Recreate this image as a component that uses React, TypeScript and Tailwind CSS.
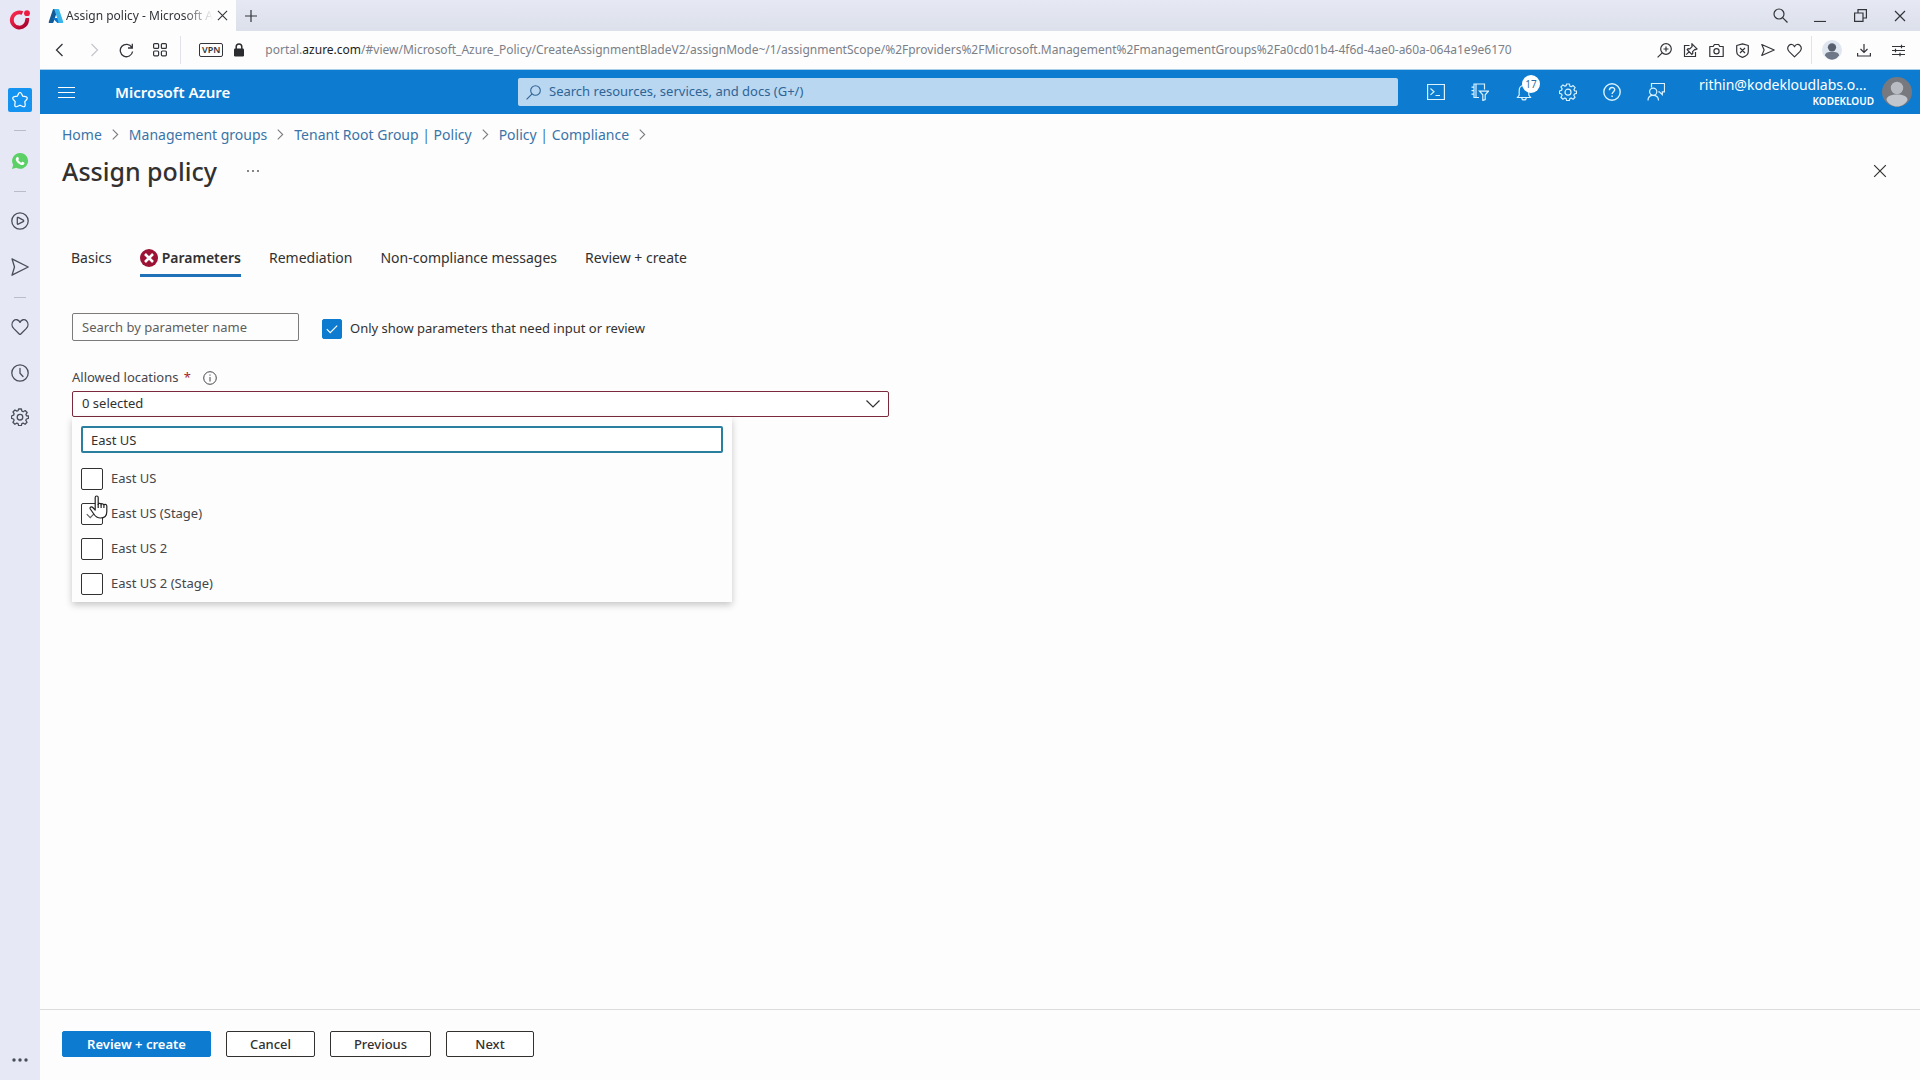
import { useState, type ReactNode } from "react";

const LOCATIONS = ["East US", "East US (Stage)", "East US 2", "East US 2 (Stage)"];
const CRUMBS = ["Home", "Management groups", "Tenant Root Group | Policy", "Policy | Compliance"];
const TABS = ["Basics", "Parameters", "Remediation", "Non-compliance messages", "Review + create"];

/* ---- Line icon base ---- */
function Icon({ size = 18, box = 18, stroke = 1.2, className = "", children }: { size?: number; box?: number; stroke?: number; className?: string; children: ReactNode }) {
  return (
    <svg width={size} height={size} viewBox={`0 0 ${box} ${box}`} fill="none" stroke="currentColor" strokeWidth={stroke} className={`shrink-0 ${className}`} aria-hidden="true">
      {children}
    </svg>
  );
}

const GEAR = "M7.6 1h2.8l.5 2.2 1.3.55 1.95-1.2 2 2-1.2 1.9.55 1.35L17.5 8v2.4l-2.1.6-.55 1.3 1.2 1.95-2 2-1.9-1.2-1.3.55-.5 2.1H7.6l-.5-2.1-1.3-.55-1.9 1.2-2-2 1.2-1.95L2.55 11 .5 10.4V8l2.1-.8.55-1.35-1.2-1.9 2-2 1.9 1.2 1.3-.55z";

function OperaLogo() {
  return (
    <svg width="22" height="22" viewBox="0 0 22 22" fill="none" aria-hidden="true">
      <defs>
        <linearGradient id="ring" x1="0" y1="0" x2="1" y2="1">
          <stop offset="0" stopColor="#ff2b4e" />
          <stop offset="1" stopColor="#a3002c" />
        </linearGradient>
      </defs>
      <path d="M13.5 4A7.6 7.6 0 1 0 18 10.5" stroke="url(#ring)" strokeWidth="3.8" />
      <circle cx="18" cy="4.2" r="2.9" fill="#ef1c42" />
      <path d="M16.5 9h3.6v3h-3.6z" fill="#c3103a" />
    </svg>
  );
}

function AzureLogo() {
  return (
    <svg width="16" height="16" viewBox="0 0 96 96" className="shrink-0" aria-hidden="true">
      <path fill="#135a96" d="M33.338 6.544h26.038l-27.03 80.087a4.152 4.152 0 0 1-3.933 2.824H8.149a4.145 4.145 0 0 1-3.928-5.47L29.404 9.368a4.152 4.152 0 0 1 3.934-2.825z" />
      <path fill="#0a78d0" d="M71.175 60.261h-41.29a1.911 1.911 0 0 0-1.305 3.309l26.532 24.764a4.171 4.171 0 0 0 2.846 1.121h23.38z" />
      <path fill="#39b5ec" d="M66.595 9.364a4.145 4.145 0 0 0-3.928-2.82H33.648a4.146 4.146 0 0 1 3.928 2.82l25.184 74.62a4.146 4.146 0 0 1-3.928 5.472h29.02a4.146 4.146 0 0 0 3.927-5.472z" />
    </svg>
  );
}

function WhatsApp() {
  return (
    <svg width="18" height="18" viewBox="0 0 18 18" aria-hidden="true">
      <path fill="#5bd066" d="M9.2 1a7.9 7.9 0 1 1-3.9 14.8L1 17l1.2-4.2A7.9 7.9 0 0 1 9.2 1z" />
      <path fill="#fff" d="M6.2 4.9c.5-.3.9-.1 1.1.4l.6 1.4c.1.3 0 .6-.6 1.3.7 1.3 1.7 2.1 3 2.7.7-.9.9-1 1.2-.9l1.6.8c.4.2.4.5.2 1.1-.4 1.2-2 1.6-3.2 1.2-2.6-.8-4.3-2.5-5.2-4.6-.5-1.4.1-2.8 1.3-3.4z" />
    </svg>
  );
}

function Avatar({ size, bg, fg, body }: { size: number; bg: string; fg: string; body: string }) {
  return (
    <svg width={size} height={size} viewBox="0 0 30 30" className="shrink-0" aria-hidden="true">
      <circle cx="15" cy="15" r="15" fill={bg} />
      <circle cx="15" cy="11" r="6.2" fill={fg} />
      <path d="M4.5 23c0-4 5-5.5 10.5-5.5S25.5 19 25.5 23c-2 4-6 6.5-10.5 6.5S6.5 27 4.5 23z" fill={body} />
    </svg>
  );
}

function IconButton({ label, className = "", children }: { label: string; className?: string; children: ReactNode }) {
  return (
    <button type="button" aria-label={label} className={`flex shrink-0 items-center justify-center ${className}`}>
      {children}
    </button>
  );
}

function Cross({ size = 12, stroke = 1.2 }: { size?: number; stroke?: number }) {
  return <Icon size={size} box={12} stroke={stroke}><path d="m1 1 10 10M11 1 1 11" /></Icon>;
}

/* ---- Browser side rail ---- */
function Divider() {
  return <div className="flex h-5 items-center"><span className="h-px w-3 bg-[#b9bcc9]" /></div>;
}

function SideRail() {
  return (
    <nav aria-label="Browser sidebar" className="flex w-10 shrink-0 flex-col items-center bg-[#e6e9f5] text-[#4a4d5c]">
      <IconButton label="Menu" className="mt-2 h-6 w-10"><OperaLogo /></IconButton>
      <IconButton label="Bookmarks" className="mt-14 mb-2 size-6 rounded-xs bg-[#1593f0] text-white">
        <Icon><path strokeLinejoin="round" d="M9 1.5c.7 0 1.1.5 1.4 1.1l1.3 2.5 2.9.6c1.7.3 2.1 1.6 1.1 2.8l-1.9 2.2.4 3c.2 1.7-.9 2.5-2.4 1.8L9 14.2l-2.8 1.3c-1.5.7-2.6-.1-2.4-1.8l.4-3-1.9-2.2c-1-1.2-.6-2.5 1.1-2.8l2.9-.6 1.3-2.5c.3-.6.7-1.1 1.4-1.1z" /></Icon>
      </IconButton>
      <Divider />
      <IconButton label="WhatsApp" className="h-[41px] w-10"><WhatsApp /></IconButton>
      <Divider />
      <IconButton label="Player" className="size-10">
        <Icon stroke={1.3}><circle cx="9" cy="9" r="8.2" /><path strokeLinejoin="round" d="M6.3 6c0-.6.4-.8.9-.6l5 2.7c.7.4.7 1.2 0 1.6l-5 2.5c-.5.2-.9 0-.9-.6z" /></Icon>
      </IconButton>
      <IconButton label="My Flow" className="mt-1.5 size-10">
        <Icon stroke={1.3}><path strokeLinejoin="round" d="M1 .8 17.2 9 1 17.2 3.5 9z" /></Icon>
      </IconButton>
      <Divider />
      <IconButton label="Favourites" className="size-10">
        <Icon stroke={1.3}><path strokeLinejoin="round" d="M9 4.4C7.7 1.3 4.3 1 2.6 2.7.5 4.8.5 8 2.6 10.4L8.2 16c.5.5 1.1.5 1.6 0l5.6-5.6c2.1-2.4 2.1-5.6 0-7.7C13.7 1 10.3 1.3 9 4.4z" /></Icon>
      </IconButton>
      <IconButton label="History" className="mt-1 h-11 w-10">
        <Icon stroke={1.3}><circle cx="9" cy="9" r="8.2" /><path strokeLinecap="round" d="M9 4.5v4.7l3 3.3" /></Icon>
      </IconButton>
      <IconButton label="Settings" className="h-11 w-10">
        <Icon stroke={1.3}><path strokeLinejoin="round" d={GEAR} /><circle cx="9" cy="9.2" r="2.8" /></Icon>
      </IconButton>
      <IconButton label="More" className="mt-auto mb-2 h-6 w-10">
        <svg width="16" height="4" viewBox="0 0 16 4" fill="currentColor" aria-hidden="true"><circle cx="2" cy="2" r="1.7" /><circle cx="8" cy="2" r="1.7" /><circle cx="14" cy="2" r="1.7" /></svg>
      </IconButton>
    </nav>
  );
}

/* ---- Tab strip and address bar ---- */
function TabStrip() {
  return (
    <div className="flex h-[31px] items-stretch bg-linear-to-b from-[#e6e9f4] to-[#dce0ea] text-[#33343a]">
      <div className="flex w-[196px] items-center bg-[#fdfdfd] pr-1 pl-2">
        <AzureLogo />
        <span className="ml-0.5 flex-1 mask-r-from-80% text-[12px] whitespace-nowrap">Assign policy - Microsoft A</span>
        <IconButton label="Close tab" className="size-5"><Cross size={11} /></IconButton>
      </div>
      <IconButton label="New tab" className="w-[30px]"><Icon size={12} box={12}><path d="M6 0v12M0 6h12" /></Icon></IconButton>
      <div className="ml-auto flex">
        <IconButton label="Search tabs" className="w-10"><Icon size={15} box={15}><circle cx="6" cy="6" r="5" /><path d="m9.6 9.6 4.9 4.9" /></Icon></IconButton>
        <IconButton label="Minimise" className="w-10"><Icon size={12} box={12}><path d="M0 11.5h12" /></Icon></IconButton>
        <IconButton label="Restore" className="w-10"><Icon size={13} box={13}><path d="M.6 4H9v8.4H.6zM4 4V.6h8.4V9H9" /></Icon></IconButton>
        <IconButton label="Close window" className="w-10"><Cross /></IconButton>
      </div>
    </div>
  );
}

function AddressBar() {
  return (
    <div className="flex h-[39px] items-center border-b border-[#a9cfe8] bg-[#fdfdfd] pl-1 text-[#33343a]">
      <IconButton label="Back" className="h-8 w-8"><Icon size={14} box={14} stroke={1.3}><path d="m9.5 1-6 6 6 6" /></Icon></IconButton>
      <IconButton label="Forward" className="h-8 w-9 text-[#c5c7cc]"><Icon size={14} box={14} stroke={1.3}><path d="m4.5 1 6 6-6 6" /></Icon></IconButton>
      <IconButton label="Reload" className="h-8 w-7"><Icon size={15} box={15} stroke={1.3}><path d="M12.8 4.3A6.2 6.2 0 1 0 13.6 8.5M13.3.8V5H9" /></Icon></IconButton>
      <IconButton label="Speed dial" className="h-8 w-10"><Icon size={14} box={14}><rect x=".6" y=".6" width="5" height="4.8" rx="1" /><rect x="8.4" y=".6" width="5" height="4.8" rx="1" /><rect x=".6" y="8" width="5" height="4.8" rx="1" /><rect x="8.4" y="8" width="5" height="4.8" rx="1" /></Icon></IconButton>
      <span className="h-7 w-px bg-[#e2e3e8]" />
      <button type="button" className="ml-[18px] h-[14px] rounded-xs border border-[#33343a] px-0.5 text-[9px] leading-3 font-semibold">VPN</button>
      <svg width="12" height="14" viewBox="0 0 12 14" className="ml-2.5" aria-hidden="true"><rect x="1" y="5.5" width="10" height="8" rx="1.2" fill="#2b2c30" /><path d="M3.2 6V3.8a2.8 2.8 0 0 1 5.6 0V6" fill="none" stroke="#2b2c30" strokeWidth="1.5" /></svg>
      <div className="ml-5 min-w-0 flex-1 truncate text-[12px] text-[#7b7f88]">
        portal.<span className="text-[#1d1e22]">azure.com</span>/#view/Microsoft_Azure_Policy/CreateAssignmentBladeV2/assignMode~/1/assignmentScope/%2Fproviders%2FMicrosoft.Management%2FmanagementGroups%2Fa0cd01b4-4f6d-4ae0-a60a-064a1e9e6170
      </div>
      <IconButton label="Zoom" className="h-8 w-[26px]"><Icon size={15} box={15}><circle cx="9" cy="6" r="5.3" /><path d="M5.2 9.8.6 14.4M9 3.5v5M6.5 6h5" /></Icon></IconButton>
      <IconButton label="Pin" className="h-8 w-[26px]"><Icon size={15} box={15}><path d="M6.5 2.5h-5v11h11V9M9 .8l5 5-1.2.8-.9-.2-2.3 2.3.2 1.7-1 .9-4.6-4.6.9-1 1.7.2 2.3-2.3-.2-.9zM6.2 8.6l-3 3" /></Icon></IconButton>
      <IconButton label="Snapshot" className="h-8 w-[26px]"><Icon size={15} box={15}><path strokeLinejoin="round" d="M.8 3.5h3.4l1.2-2h4.2l1.2 2h3.4v10H.8z" /><circle cx="7.5" cy="8.2" r="2.6" /></Icon></IconButton>
      <IconButton label="Ad blocker" className="h-8 w-[26px]"><Icon size={15} box={15}><path strokeLinejoin="round" d="m7.5.8 5.8 1.7v6c0 3-3 5-5.8 5.9-2.8-.9-5.8-2.9-5.8-5.9v-6zM5 5l5 5M10 5l-5 5" /></Icon></IconButton>
      <IconButton label="Send" className="h-8 w-[26px]"><Icon size={14} stroke={1.5}><path strokeLinejoin="round" d="m1 2 16 7-16 7 3-7z" /></Icon></IconButton>
      <IconButton label="Favourite" className="h-8 w-[26px]"><Icon size={15} stroke={1.4}><path strokeLinejoin="round" d="M9 4.4C7.7 1.3 4.3 1 2.6 2.7.5 4.8.5 8 2.6 10.4L9 16.6l6.4-6.2c2.1-2.4 2.1-5.6 0-7.7C13.7 1 10.3 1.3 9 4.4z" /></Icon></IconButton>
      <span className="mx-1 h-7 w-px bg-[#e2e3e8]" />
      <IconButton label="Profile" className="size-8"><Avatar size={20} bg="#e0e6ef" fg="#58606f" body="#6d7788" /></IconButton>
      <IconButton label="Downloads" className="size-8"><Icon size={14} box={14}><path d="M7 1v8.5M3.5 6 7 9.5 10.5 6M.6 10v3h12.8v-3" /></Icon></IconButton>
      <IconButton label="Easy setup" className="mr-1 h-8 w-9"><Icon size={13} box={13}><path d="M0 2.5h13M0 6.5h13M0 10.5h13M9.5.8v3.4M3.5 4.8v3.4M8 8.8v3.4" /></Icon></IconButton>
    </div>
  );
}

/* ---- Portal header ---- */
function PortalHeader() {
  return (
    <header className="flex h-11 items-center bg-[#0c7bd0] text-white">
      <div className="flex w-[478px] shrink-0 items-center">
        <IconButton label="Show portal menu" className="ml-2 h-11 w-9"><Icon size={17} box={17}><path d="M0 3.5h17M0 8.5h17M0 13.5h17" /></Icon></IconButton>
        <a href="#home" className="ml-[31px] text-[15px] font-semibold">Microsoft Azure</a>
      </div>
      <label className="flex h-7 min-w-0 flex-1 items-center rounded-xs bg-[#b9d7f1] px-2 text-[#2f6496]">
        <Icon size={15} box={15} stroke={1.1}><circle cx="9.5" cy="5.5" r="4.8" /><path d="M6.1 8.9.6 14.4" /></Icon>
        <input type="search" aria-label="Search" placeholder="Search resources, services, and docs (G+/)" className="ml-2 min-w-0 flex-1 text-[13px] outline-none placeholder:text-[#2f6496]" />
      </label>
      <div className="flex items-center pl-4 text-[#d9f2ff]">
        <IconButton label="Cloud Shell" className="size-11"><Icon><path d="M.6 1.5h16.8v15H.6zM3.500 5.500 7 8.700l-3.500 3.200M8.500 12.500H13" /></Icon></IconButton>
        <IconButton label="Directories and subscriptions" className="size-11"><Icon><path d="M8 14.5H3V1h10.5v5.5M.5 4.2H3M.5 7.7H3M.5 11.2H3M5 1v13.5M8.500 8.200h8.900l-3.200 3.600v4.700l-2.400 1v-5.700z" /></Icon></IconButton>
        <div className="relative">
          <IconButton label="Notifications" className="size-11"><Icon><path d="M2.500 14.500h13l-1.700-2.500V7.500c0-3-2-5-4.800-5s-4.800 2-4.800 5V12zM6.800 14.700c0 3 4.400 3 4.400 0" /></Icon></IconButton>
          <span className="absolute top-[5px] left-5 grid size-[18px] place-items-center rounded-full bg-white text-[10px] text-[#2b6ca5]">17</span>
        </div>
        <IconButton label="Settings" className="size-11"><Icon><path strokeLinejoin="round" d={GEAR} /><circle cx="9" cy="9.2" r="3" /></Icon></IconButton>
        <IconButton label="Help" className="size-11"><Icon stroke={1.4}><circle cx="9" cy="9" r="8.2" /><path d="M6.4 7.2c0-3.6 5.3-3.6 5.3-.4 0 1.8-2.6 2-2.6 4.2M9.1 12.4v1.7" /></Icon></IconButton>
        <IconButton label="Feedback" className="size-11"><Icon><path d="M4.5 4.5v-4h13v8.300h-2.200v2.800l-3-2.800h-1M1 17.500c0-3.600 2.200-5.200 5-5.200s5.500 1.600 5.500 5.200" /><circle cx="6.2" cy="8.7" r="3.6" /></Icon></IconButton>
      </div>
      <button type="button" className="ml-[21px] flex items-center gap-2 pr-2">
        <span className="flex w-[175px] flex-col items-end">
          <span className="w-full text-left text-[14px] leading-[18px] whitespace-nowrap">rithin@kodekloudlabs.o...</span>
          <span className="text-[10px] leading-[14px] font-semibold">KODEKLOUD</span>
        </span>
        <Avatar size={30} bg="#77797e" fg="#b9bcc3" body="#c3c6cd" />
      </button>
    </header>
  );
}

/* ---- Form pieces ---- */
function Tick({ className = "" }: { className?: string }) {
  return <Icon size={12} box={12} className={`pointer-events-none col-start-1 row-start-1 ${className}`}><path d="m.8 6.2 3.400 3.400 7-7" /></Icon>;
}

function LocationRow({ name, hovered }: { name: string; hovered?: boolean }) {
  return (
    <label className="flex h-[35px] items-center gap-2 text-[13px] text-[#45464a]">
      <span className="grid shrink-0 place-items-center">
        <input type="checkbox" className="peer col-start-1 row-start-1 size-[22px] appearance-none rounded-xs border border-[#323130] bg-white" />
        <Tick className={hovered ? "text-[#605e5c]" : "text-transparent peer-checked:text-[#605e5c]"} />
      </span>
      {name}
    </label>
  );
}

function HandCursor() {
  return (
    <svg width="20" height="24" viewBox="0 0 20 24" className="pointer-events-none absolute top-[78px] left-[17px]" aria-hidden="true">
      <path d="M6.2 2.5c0-2 3-2 3 0v7c0-1.600 2.900-1.500 2.900.3 0-1.500 2.800-1.300 2.800.5 0-1.300 2.900-1.200 2.900.8v5.400c0 4-2.500 6.500-6.300 6.500-3.300 0-5-1.300-6.700-4L1.300 14c-1-1.600 1.200-2.900 2.500-1.500l2.400 2.600z" fill="#fff" stroke="#222" strokeWidth="1.2" strokeLinejoin="round" />
      <path d="M9.2 9v4M12.1 10v3M14.9 10.5V13" stroke="#222" strokeWidth="1.2" />
    </svg>
  );
}

function Locations() {
  const [query, setQuery] = useState("East US");
  const rows = LOCATIONS.filter((l) => l.toLowerCase().includes(query.toLowerCase()));
  return (
    <div className="relative mt-6 w-[817px] max-w-full">
      <div className="flex h-[26px] items-center text-[13px] text-[#45464a]">
        <label htmlFor="locations">Allowed locations <span className="ml-0.5 text-[#a4262c]">*</span></label>
        <Icon size={14} box={14} stroke={1} className="ml-3"><circle cx="7" cy="7" r="6.3" /><path d="M7 6v4.5M7 3.500v1.200" /></Icon>
      </div>
      <div className="grid items-center">
        <select id="locations" className="col-start-1 row-start-1 h-[26px] appearance-none rounded-xs border border-[#7a2a3c] bg-white px-[9px] text-[13px] text-[#323130]">
          <option>0 selected</option>
        </select>
        <Icon size={14} box={14} className="pointer-events-none col-start-1 row-start-1 mr-[9px] justify-self-end text-[#323130]"><path d="M.5 3.500 7 10l6.500-6.500" /></Icon>
      </div>
      <div className="absolute top-full left-0 w-[660px] max-w-full bg-[#fdfdfd] px-[9px] pt-[9px] pb-px shadow-[0_3px_7px_rgba(0,0,0,0.22)]">
        <input type="text" aria-label="Filter locations" value={query} onChange={(e) => setQuery(e.target.value)} className="mb-2 block h-[27px] w-full rounded-xs border-2 border-[#2a7f9e] bg-white px-2 text-[13px] text-[#323130] outline-none" />
        {rows.map((l) => <LocationRow key={l} name={l} hovered={l === "East US (Stage)"} />)}
        <HandCursor />
      </div>
    </div>
  );
}

function ErrorBadge() {
  return (
    <svg width="18" height="18" viewBox="0 0 18 18" className="mr-1" aria-hidden="true">
      <circle cx="9" cy="9" r="9" fill="#9b1234" />
      <path d="m5 5 8 8M13 5l-8 8" stroke="#fff" strokeWidth="2.6" />
    </svg>
  );
}

function FooterButton({ label, className }: { label: string; className: string }) {
  return <button type="button" className={`h-[26px] rounded-xs border text-[13px] leading-none ${className}`}>{label}</button>;
}

export default function App() {
  return (
    <div className="flex min-h-screen bg-[#fdfdfd] font-['Noto_Sans',sans-serif] text-[#323130]">
      <SideRail />
      <div className="flex min-w-0 flex-1 flex-col">
        <TabStrip />
        <AddressBar />
        <PortalHeader />
        <main className="flex flex-1 flex-col pl-[22px]">
          <nav aria-label="Breadcrumb" className="flex h-10 items-center gap-2 text-[14px] text-[#3a74a8]">
            {CRUMBS.map((c) => (
              <span key={c} className="flex items-center gap-2">
                <a href="#crumb">{c}</a>
                <Icon size={11} box={10} stroke={1} className="text-[#7a7c80]"><path d="M2.500.5 7 5 2.500 9.500" /></Icon>
              </span>
            ))}
          </nav>
          <div className="flex h-[33px] items-center">
            <h1 className="text-[25px] leading-8 font-medium">Assign policy</h1>
            <IconButton label="More" className="ml-7 h-6 w-4"><svg width="12" height="2" viewBox="0 0 12 2" fill="#605e5c" aria-hidden="true"><circle cx="1" cy="1" r="1" /><circle cx="6" cy="1" r="1" /><circle cx="11" cy="1" r="1" /></svg></IconButton>
            <IconButton label="Close" className="mr-6 ml-auto size-8"><Cross size={14} stroke={1} /></IconButton>
          </div>
          <div role="tablist" className="mt-[54px] ml-[9px] flex gap-7 text-[14px]">
            {TABS.map((t) => {
              const active = t === "Parameters";
              return (
                <button key={t} type="button" role="tab" aria-selected={active} className={`flex h-9 items-center border-b-3 ${active ? "border-[#1f72b8] font-semibold" : "border-transparent"}`}>
                  {active && <ErrorBadge />}
                  {t}
                </button>
              );
            })}
          </div>
          <section className="pt-9 pl-[10px]">
            <div className="flex items-start">
              <input type="text" aria-label="Search by parameter name" placeholder="Search by parameter name" className="h-7 w-[227px] rounded-xs border border-[#7d7b79] px-[9px] text-[13px] outline-none placeholder:text-[#605e5c]" />
              <label className="ml-[23px] flex items-center gap-2 pt-[6px] text-[13px]">
                <span className="grid place-items-center">
                  <input type="checkbox" defaultChecked className="peer col-start-1 row-start-1 size-5 appearance-none rounded-xs border border-[#323130] checked:border-[#0c7bd0] checked:bg-[#0c7bd0]" />
                  <Tick className="text-white" />
                </span>
                Only show parameters that need input or review
              </label>
            </div>
            <Locations />
          </section>
        </main>
        <footer className="flex h-[71px] items-center gap-[15px] border-t border-[#dcdcdc] pb-0.5 pl-[22px]">
          <FooterButton label="Review + create" className="w-[149px] border-[#0c7bd0] bg-[#0c7bd0] font-semibold text-white" />
          <FooterButton label="Cancel" className="w-[89px] border-[#323130] bg-white font-medium" />
          <FooterButton label="Previous" className="w-[101px] border-[#323130] bg-white font-medium" />
          <FooterButton label="Next" className="w-[88px] border-[#323130] bg-white font-medium" />
        </footer>
      </div>
    </div>
  );
}
